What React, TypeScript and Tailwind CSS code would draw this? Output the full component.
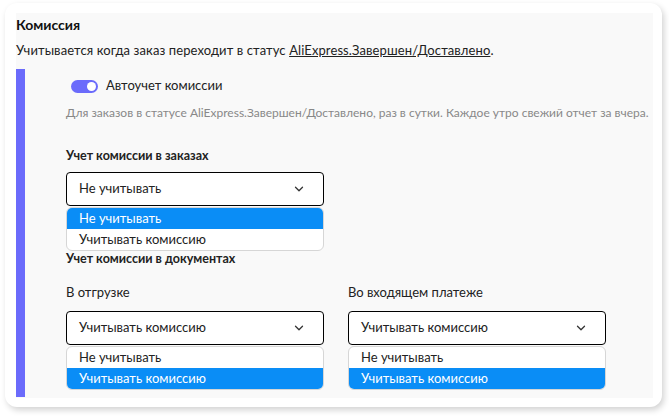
import { ChevronDown } from 'lucide-react'

const font = { fontFamily: 'Lato, "Noto Sans", sans-serif' }

function Select({ value }: { value: string }) {
  return (
    <div className="flex h-[34px] w-[258px] items-center justify-between rounded-[4px] border border-black bg-white pl-3 pr-[17px] text-[13px] text-[#222]">
      <span>{value}</span>
      <ChevronDown className="h-[14px] w-[14px] text-[#333]" strokeWidth={2.2} />
    </div>
  )
}

function Options({ selected }: { selected: number }) {
  const items = ['Не учитывать', 'Учитывать комиссию']
  return (
    <div className="mt-[1px] w-[258px] overflow-hidden rounded-[6px] border border-[#d6d6d6] bg-white text-[13px]">
      {items.map((item, i) => (
        <div
          key={item}
          className={
            'flex h-[21px] items-center pl-3 ' +
            (i === selected ? 'bg-[#0a8df6] text-white' : 'text-[#222]')
          }
        >
          {item}
        </div>
      ))}
    </div>
  )
}

export default function App() {
  return (
    <div className="h-[417px] w-[669px] bg-white pl-[5px] pt-[3px]" style={font}>
      <div className="h-[404px] w-[657px] rounded-[12px] bg-white pl-[11px] pr-[9px] pt-[10px] shadow-[2px_3px_6px_rgba(0,0,0,0.18)]">
        <div className="h-[385px] bg-[#f9f9f9]">
          <div className="pt-[3px] text-[14px] font-bold leading-[18px] text-[#111]">Комиссия</div>
          <div className="mt-[7px] text-[13px] leading-[18px] tracking-[0.1px] text-[#222]">
            Учитывается когда заказ переходит в статус{' '}
            <span className="underline">AliExpress.Завершен/Доставлено</span>.
          </div>
          <div className="mt-[10px] flex h-[328px]">
            {/* accent bar */}
            <div className="w-[9px] shrink-0 bg-[#6b6bfb]" />
            <div className="min-w-0 pl-[41px] pt-[8px]">
              <div className="flex h-[18px] items-center gap-2 pl-[5px]">
                <div className="relative h-[13px] w-[27px] rounded-full bg-[#6b6bfb]">
                  <div className="absolute right-[2px] top-[2px] h-[9px] w-[9px] rounded-full bg-white" />
                </div>
                <span className="text-[13px] text-[#222]">Автоучет комиссии</span>
              </div>
              <div className="mt-[9px] whitespace-nowrap text-[12px] leading-[18px] text-[#888]">
                Для заказов в статусе AliExpress.Завершен/Доставлено, раз в сутки. Каждое утро свежий отчет за вчера.
              </div>
              <div className="mt-[25px] text-[12.5px] font-bold leading-[18px] text-[#222]">Учет комиссии в заказах</div>
              <div className="mt-[7px]">
                <Select value="Не учитывать" />
                <Options selected={0} />
              </div>
              <div className="text-[12.5px] font-bold leading-[16px] text-[#222]">Учет комиссии в документах</div>
              <div className="mt-[16px] flex gap-6">
                <div>
                  <div className="text-[13px] leading-[18px] text-[#222]">В отгрузке</div>
                  <div className="mt-[10px]">
                    <Select value="Учитывать комиссию" />
                    <Options selected={1} />
                  </div>
                </div>
                <div>
                  <div className="text-[13px] leading-[18px] text-[#222]">Во входящем платеже</div>
                  <div className="mt-[10px]">
                    <Select value="Учитывать комиссию" />
                    <Options selected={1} />
                  </div>
                </div>
              </div>
            </div>
          </div>
        </div>
      </div>
    </div>
  )
}
